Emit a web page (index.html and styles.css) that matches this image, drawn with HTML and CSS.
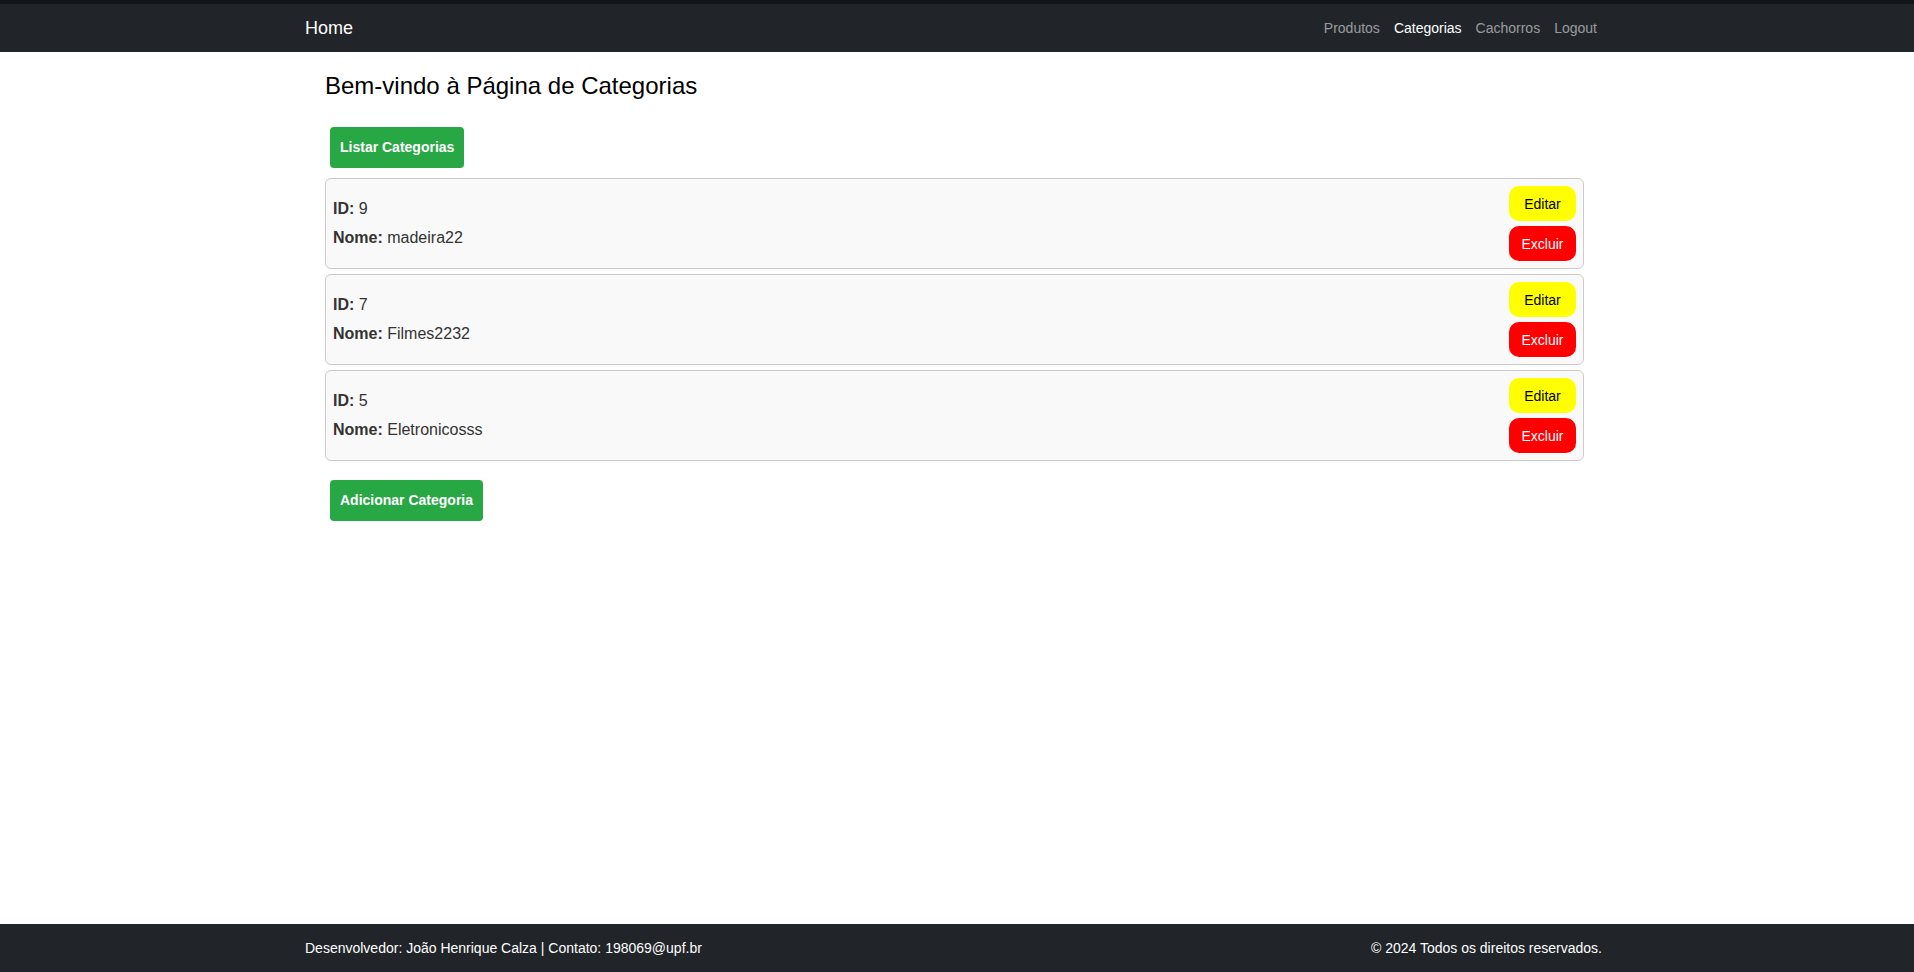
FILE: index.html
```html
<!DOCTYPE html>
<html lang="pt-BR">
<head>
<meta charset="utf-8">
<title>Categorias</title>
<link rel="stylesheet" href="styles.css">
</head>
<body>
<header class="navbar">
  <div class="container nav-inner">
    <a class="brand" href="#">Home</a>
    <ul class="nav-links">
      <li><a href="#">Produtos</a></li>
      <li><a class="active" href="#">Categorias</a></li>
      <li><a href="#">Cachorros</a></li>
      <li><a href="#">Logout</a></li>
    </ul>
  </div>
</header>

<main class="main">
  <h2 class="title">Bem-vindo à Página de Categorias</h2>
  <div class="top-actions">
    <button class="btn-green">Listar Categorias</button>
  </div>
  <div class="list">
    <div class="card">
      <div class="info">
        <p><strong>ID:</strong> 9</p>
        <p><strong>Nome:</strong> madeira22</p>
      </div>
      <div class="card-actions">
        <button class="btn-edit">Editar</button>
        <button class="btn-delete">Excluir</button>
      </div>
    </div>
    <div class="card">
      <div class="info">
        <p><strong>ID:</strong> 7</p>
        <p><strong>Nome:</strong> Filmes2232</p>
      </div>
      <div class="card-actions">
        <button class="btn-edit">Editar</button>
        <button class="btn-delete">Excluir</button>
      </div>
    </div>
    <div class="card">
      <div class="info">
        <p><strong>ID:</strong> 5</p>
        <p><strong>Nome:</strong> Eletronicosss</p>
      </div>
      <div class="card-actions">
        <button class="btn-edit">Editar</button>
        <button class="btn-delete">Excluir</button>
      </div>
    </div>
  </div>
  <div class="bottom-actions">
    <button class="btn-green">Adicionar Categoria</button>
  </div>
</main>

<footer class="footer">
  <div class="container footer-inner">
    <span>Desenvolvedor: João Henrique Calza | Contato: 198069@upf.br</span>
    <span>© 2024 Todos os direitos reservados.</span>
  </div>
</footer>
</body>
</html>
```
FILE: styles.css
```css
* { box-sizing: border-box; }

html, body {
  margin: 0;
  padding: 0;
}

body {
  font-family: "Liberation Sans", Arial, sans-serif;
  color: #000;
  background: #fff;
  min-height: 100vh;
  display: flex;
  flex-direction: column;
}

.container {
  width: 1299px;
  margin-left: calc(50% - 652px);
}

.navbar {
  background: #212529;
  border-top: 4px solid #131619;
  height: 52px;
}

.nav-inner {
  height: 48px;
  display: flex;
  align-items: center;
  justify-content: space-between;
}

.brand {
  color: #fff;
  font-size: 18px;
  text-decoration: none;
}

.nav-links {
  list-style: none;
  margin: 0;
  padding: 0;
  display: flex;
}

.nav-links a {
  display: block;
  padding: 0 7px;
  font-size: 14px;
  color: rgba(255, 255, 255, 0.55);
  text-decoration: none;
}

.nav-links a.active {
  color: #fff;
}

.main {
  flex: 1;
  width: 1259px;
  margin-left: calc(50% - 632px);
}

.title {
  font-size: 24px;
  font-weight: normal;
  margin: 20px 0 22px;
  line-height: 28px;
}

.btn-green {
  font-family: "Liberation Sans", Arial, sans-serif;
  background: #28a745;
  color: #fff;
  border: none;
  border-radius: 4px;
  font-size: 14px;
  font-weight: bold;
  padding: 12px 10px;
  line-height: 17px;
  margin: 5px;
  cursor: pointer;
}

.list {
  margin-top: 5px;
  margin-bottom: 14px;
}

.card {
  display: flex;
  align-items: center;
  justify-content: space-between;
  height: 91px;
  border: 1px solid #ccc;
  border-radius: 6px;
  background: #f9f9f9;
  padding: 7px;
  margin-bottom: 5px;
  color: #333;
}

.info p {
  margin: 5px 0;
  font-size: 16px;
  line-height: 24px;
}

.card-actions {
  display: flex;
  flex-direction: column;
  gap: 5px;
  width: 67px;
}

.card-actions button {
  font-family: "Liberation Sans", Arial, sans-serif;
  font-size: 14px;
  height: 35px;
  border: none;
  border-radius: 10px;
  cursor: pointer;
  padding: 0;
}

.btn-edit {
  background: #ffff00;
  color: #000;
}

.btn-delete {
  background: #ff0000;
  color: #fff;
}

.footer {
  background: #212529;
  height: 48px;
  color: #fff;
  font-size: 14px;
}

.footer-inner {
  height: 48px;
  display: flex;
  align-items: center;
  justify-content: space-between;
  padding-right: 2px;
}
```
